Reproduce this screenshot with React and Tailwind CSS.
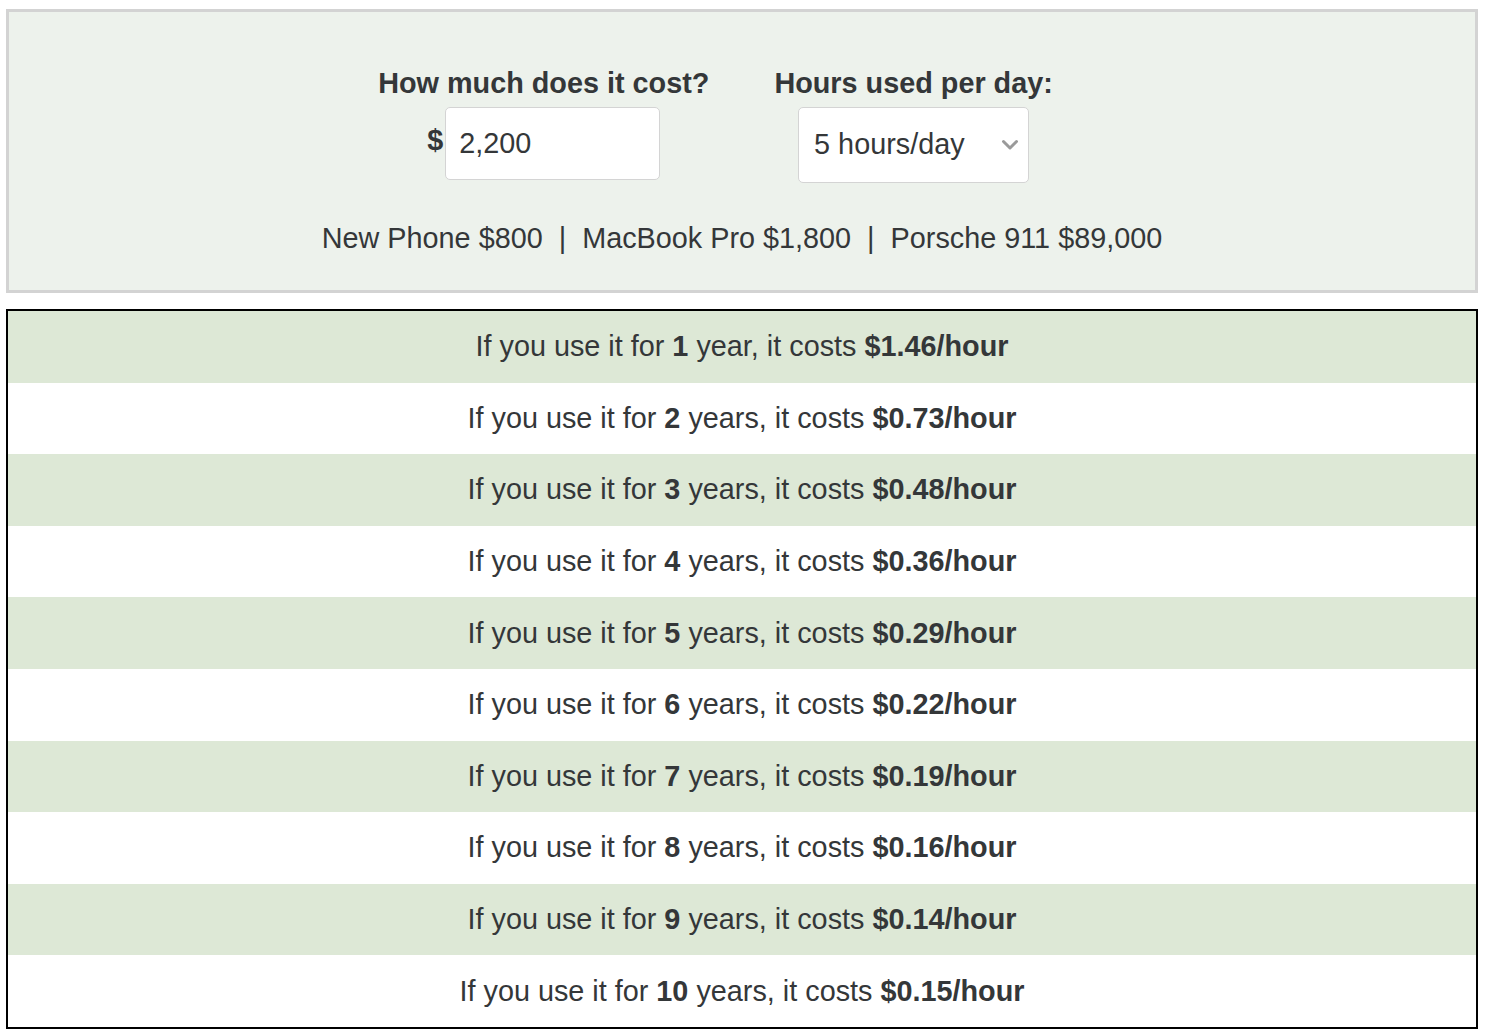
import React from "react";

const rows = [
  ["1", "year", "$1.46"],
  ["2", "years", "$0.73"],
  ["3", "years", "$0.48"],
  ["4", "years", "$0.36"],
  ["5", "years", "$0.29"],
  ["6", "years", "$0.22"],
  ["7", "years", "$0.19"],
  ["8", "years", "$0.16"],
  ["9", "years", "$0.14"],
  ["10", "years", "$0.15"],
];

export default function App() {
  return (
    <div
      className="w-[1488px] h-[1036px] bg-white text-[#343739] overflow-hidden"
      style={{ fontFamily: '"Liberation Sans", Arial, sans-serif' }}
    >
      <div className="pt-[9px] pl-[6px] pr-[10px]">
        <div className="h-[284px] border-[3px] border-[#d3d3d3] bg-[#edf2ec] flex flex-col items-center">
          <div className="flex justify-center gap-[65px] mt-[51px] mr-[53px]">
            <div className="flex flex-col items-center">
              <div className="text-[28.8px] font-bold leading-[40px]">How much does it cost?</div>
              <div className="flex items-center mt-[4px]">
                <span className="text-[28.8px] font-bold mr-[2px] -mt-[6px]">$</span>
                <div className="w-[215px] h-[73px] bg-white border border-[#d4d4d4] rounded-[5px] flex items-center pl-[13px] text-[28.8px]">
                  2,200
                </div>
              </div>
            </div>
            <div className="flex flex-col items-center">
              <div className="text-[28.8px] font-bold leading-[40px]">Hours used per day:</div>
              <div className="w-[231px] h-[76px] mt-[4px] bg-white border border-[#d4d4d4] rounded-[5px] flex items-center justify-between pl-[15px] pr-[9px] text-[28.8px]">
                <span>5 hours/day</span>
                <svg width="18" height="12" viewBox="0 0 18 12" fill="none" stroke="#9a9a9a" strokeWidth="3" strokeLinecap="round" strokeLinejoin="round">
                  <path d="M2.5 2.5l6.5 6.5 6.5-6.5" />
                </svg>
              </div>
            </div>
          </div>
          <div className="mt-[35px] text-[28.8px] leading-[40px] whitespace-pre">
            {"New Phone $800  |  MacBook Pro $1,800  |  Porsche 911 $89,000"}
          </div>
        </div>
      </div>
      <div className="mt-[16px] ml-[6px] mr-[10px] border-2 border-black">
        {rows.map(([n, unit, price], i) => (
          <div
            key={n}
            className={
              "h-[71.6px] flex items-center justify-center text-[28.8px] " +
              (i % 2 === 0 ? "bg-[#dde8d6]" : "bg-white")
            }
          >
            <span>
              If you use it for <b>{n}</b> {unit}, it costs <b>{price}/hour</b>
            </span>
          </div>
        ))}
      </div>
    </div>
  );
}
